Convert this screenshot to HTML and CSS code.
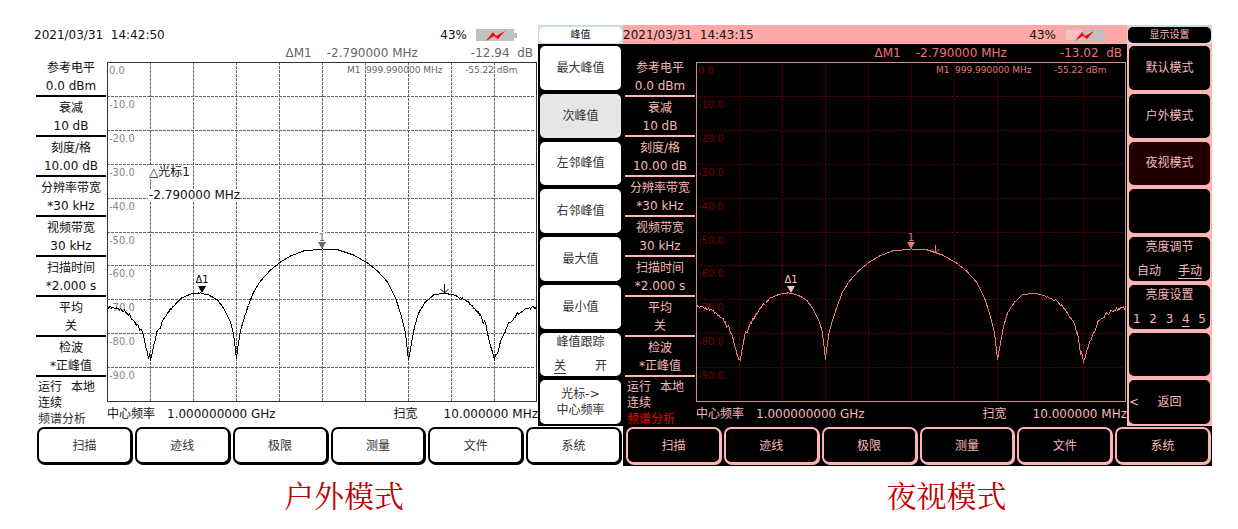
FILE: index.html
```html
<!DOCTYPE html>
<html lang="zh-CN">
<head>
    <meta charset="UTF-8" />
    <meta name="viewport" content="width=device-width, initial-scale=1.0"/>
    <title>频谱分析 - 显示模式</title>

    <link rel="stylesheet" href="styles.css">
</head>

<body>

<div class="compare">

    <!-- 户外模式 -->
    <figure class="mode">
        <div class="analyzer outdoor">
            <div class="main">
                <div class="topbar">
                    <span class="clock">2021/03/31&nbsp; 14:42:50</span>
                    <span>43%</span>
                    <svg class="battery" viewBox="0 0 42 12" aria-hidden="true">
                        <path class="battery-body" d="M0 0H38V12H0Z"/>
                        <path class="battery-nub" d="M38 4H41V9H38Z"/>
                        <path class="bolt" d="M10 12L17 3L20 7L29 2L22 10L18 7Z"/>
                    </svg>
                </div>

                <div class="side">
                    <dl class="params">
                        <div><dt>参考电平</dt><dd>0.0 dBm</dd></div>
                        <div><dt>衰减</dt><dd>10 dB</dd></div>
                        <div><dt>刻度/格</dt><dd>10.00 dB</dd></div>
                        <div><dt>分辨率带宽</dt><dd>*30 kHz</dd></div>
                        <div><dt>视频带宽</dt><dd>30 kHz</dd></div>
                        <div><dt>扫描时间</dt><dd>*2.000 s</dd></div>
                        <div><dt>平均</dt><dd>关</dd></div>
                        <div><dt>检波</dt><dd>*正峰值</dd></div>
                    </dl>
                    <div class="status">
                        <p><span>运行</span><span>本地</span></p>
                        <p>连续</p>
                        <p class="app-name">频谱分析</p>
                    </div>
                </div>

                <div class="readout">
                    <span>ΔM1</span>
                    <span class="delta-freq">-2.790000 MHz</span>
                    <span>-12.94&nbsp; dB</span>
                </div>

                <svg class="plot" viewBox="0 0 431 340" data-seed="7">
                    <g class="grid"></g>
                    <g class="note">
                        <rect x="41" y="104" width="41" height="13"/>
                        <rect x="41" y="127" width="91" height="13"/>
                        <text x="42" y="114">△光标1</text>
                        <text x="42" y="137">-2.790000 MHz</text>
                    </g>
                    <g class="peak-info">
                        <text x="240" y="11">M1</text>
                        <text x="259" y="11">999.990000 MHz</text>
                        <text x="358" y="11">-55.22 dBm</text>
                    </g>
                    <polyline class="trace"/>
                    <g class="marker-ref">
                        <rect x="212" y="170" width="6" height="9"/>
                        <text x="215" y="179">1</text>
                        <path d="M211 180H219L215 187Z"/>
                    </g>
                    <g class="marker-delta">
                        <text x="95" y="221">Δ1</text>
                        <path d="M91 224H99L95 231Z"/>
                    </g>
                    <path class="cursor" d="M337.500 222V231M333.500 227L337.500 231L341.500 227"/>
                </svg>

                <div class="freq">
                    <span>中心频率</span>
                    <span>1.000000000 GHz</span>
                    <span class="span-label">扫宽</span>
                    <span>10.000000 MHz</span>
                </div>
            </div>

            <div class="softkeys">
                <div class="softkeys-title"><span>峰值</span></div>
                <button>最大峰值</button>
                <button class="selected">次峰值</button>
                <button>左邻峰值</button>
                <button>右邻峰值</button>
                <button>最大值</button>
                <button>最小值</button>
                <button class="choice">峰值跟踪<span class="options"><u>关</u><span>开</span></span></button>
                <button>光标-&gt;<br>中心频率</button>
            </div>

            <div class="menu">
                <button>扫描</button>
                <button>迹线</button>
                <button>极限</button>
                <button>测量</button>
                <button>文件</button>
                <button>系统</button>
            </div>
        </div>
        <figcaption>户外模式</figcaption>
    </figure>

    <!-- 夜视模式 -->
    <figure class="mode">
        <div class="analyzer night">
            <div class="main">
                <div class="topbar">
                    <span class="clock">2021/03/31&nbsp; 14:43:15</span>
                    <span>43%</span>
                    <svg class="battery" viewBox="0 0 42 12" aria-hidden="true">
                        <path class="battery-body" d="M0 0H38V12H0Z"/>
                        <path class="battery-nub" d="M38 4H41V9H38Z"/>
                        <path class="battery-charge" d="M1 1H17V11H1Z"/>
                        <path class="bolt" d="M10 12L17 3L20 7L29 2L22 10L18 7Z"/>
                    </svg>
                </div>

                <div class="side">
                    <dl class="params">
                        <div><dt>参考电平</dt><dd>0.0 dBm</dd></div>
                        <div><dt>衰减</dt><dd>10 dB</dd></div>
                        <div><dt>刻度/格</dt><dd>10.00 dB</dd></div>
                        <div><dt>分辨率带宽</dt><dd>*30 kHz</dd></div>
                        <div><dt>视频带宽</dt><dd>30 kHz</dd></div>
                        <div><dt>扫描时间</dt><dd>*2.000 s</dd></div>
                        <div><dt>平均</dt><dd>关</dd></div>
                        <div><dt>检波</dt><dd>*正峰值</dd></div>
                    </dl>
                    <div class="status">
                        <p><span>运行</span><span>本地</span></p>
                        <p>连续</p>
                        <p class="app-name">频谱分析</p>
                    </div>
                </div>

                <div class="readout">
                    <span>ΔM1</span>
                    <span class="delta-freq">-2.790000 MHz</span>
                    <span>-13.02&nbsp; dB</span>
                </div>

                <svg class="plot" viewBox="0 0 431 340" data-seed="23">
                    <g class="grid"></g>
                    <g class="peak-info">
                        <text x="240" y="11">M1</text>
                        <text x="259" y="11">999.990000 MHz</text>
                        <text x="358" y="11">-55.22 dBm</text>
                    </g>
                    <polyline class="trace"/>
                    <g class="marker-ref">
                        <rect x="212" y="170" width="6" height="9"/>
                        <text x="215" y="179">1</text>
                        <path d="M211 180H219L215 187Z"/>
                    </g>
                    <g class="marker-delta">
                        <text x="95" y="221">Δ1</text>
                        <path d="M91 224H99L95 231Z"/>
                    </g>
                    <path class="cursor" d="M239.500 183V191M235.500 187L239.500 191L243.500 187"/>
                </svg>

                <div class="freq">
                    <span>中心频率</span>
                    <span>1.000000000 GHz</span>
                    <span class="span-label">扫宽</span>
                    <span>10.000000 MHz</span>
                </div>
            </div>

            <div class="softkeys">
                <div class="softkeys-title"><span>显示设置</span></div>
                <button>默认模式</button>
                <button>户外模式</button>
                <button class="selected">夜视模式</button>
                <button aria-label="空"></button>
                <button class="choice">亮度调节<span class="options"><span>自动</span><u>手动</u></span></button>
                <button class="choice">亮度设置<span class="options levels"><span>1</span><span>2</span><span>3</span><u>4</u><span>5</span></span></button>
                <button aria-label="空"></button>
                <button class="back"><span class="arrow">&lt;</span>返回</button>
            </div>

            <div class="menu">
                <button>扫描</button>
                <button>迹线</button>
                <button>极限</button>
                <button>测量</button>
                <button>文件</button>
                <button>系统</button>
            </div>
        </div>
        <figcaption class="caption-night">夜视模式</figcaption>
    </figure>

</div>

<script>
    /* 迹线采样点 [x, y] */
    const points = [
        [0, 245], [10, 246], [20, 251], [28, 260], [35, 271], [40, 290], [43, 299], [45, 290],
        [49, 272], [56, 258], [63, 247], [74, 236], [83, 232], [93, 231], [101, 233], [110, 238],
        [116, 246], [123, 260], [126, 271], [129, 298], [130, 288], [133, 268], [140, 246],
        [146, 230], [153, 219], [163, 208], [173, 200], [183, 194], [196, 189], [215, 187],
        [231, 188], [246, 193], [260, 201], [270, 209], [280, 220], [288, 236], [293, 251],
        [298, 271], [301, 298], [304, 281], [307, 265], [311, 251], [318, 240], [326, 233],
        [337, 231], [346, 233], [360, 239], [370, 249], [378, 263], [381, 273], [384, 290],
        [387, 297], [391, 290], [395, 275], [401, 261], [410, 252], [420, 247], [430, 245]
    ];

    function drawGrid(group) {
        let html = '';
        for (let i = 1; i < 10; i++) {
            const x = i * 43 + 0.5;
            const y = Math.round(i * 33.9) + 0.5;
            html += `<path class="grid-line" d="M${x} 0V340M0 ${y}H427"/>`;
        }
        for (let i = 0; i < 10; i++) {
            const label = i === 0 ? '0.0' : `-${i * 10}.0`;
            html += `<text x="2" y="${Math.round(12 + i * 33.9)}">${label}</text>`;
        }
        html += '<rect class="frame" x="0.5" y="0.5" width="429" height="339"/>';
        group.innerHTML = html;
    }

    function drawTrace(line, seed) {
        const random = () => {
            seed = (seed * 16807) % 2147483647;
            return seed / 2147483647 - 0.5;
        };
        const out = [];
        for (let i = 0; i < points.length - 1; i++) {
            const [x0, y0] = points[i];
            const [x1, y1] = points[i + 1];
            for (let x = x0; x < x1; x++) {
                const y = y0 + (y1 - y0) * (x - x0) / (x1 - x0);
                // 电平越低噪声越大
                const noise = y > 225 ? (y - 215) / 11 : 0;
                const edge = x < 70 || x > 345 ? 1 : 0.3;
                out.push(`${x + 0.5},${(y + random() * noise * edge).toFixed(1)}`);
            }
        }
        line.setAttribute('points', out.join(' '));
    }

    document.querySelectorAll('.plot').forEach(plot => {
        drawGrid(plot.querySelector('.grid'));
        drawTrace(plot.querySelector('.trace'), Number(plot.dataset.seed));
    });
</script>

</body>
</html>
```
FILE: styles.css
```css
* {
    box-sizing: border-box;
    margin: 0;
    padding: 0;
}

body {
    background: #fff;
    padding: 25px 26px 0 34px;
    font-family: "DejaVu Sans", "Noto Sans CJK SC", sans-serif;
    font-size: 12px;
}

.compare {
    display: grid;
    grid-template-columns: 1fr 1fr;
}

figcaption {
    margin-top: 11px;
    padding-left: 31px;
    text-align: center;
    color: #c00000;
    font-family: "Liberation Serif", "Noto Serif CJK SC", "Noto Sans CJK SC", serif;
    font-size: 30px;
    line-height: 40px;
}

.caption-night { padding-left: 58px; }

/* =========================
   THEMES
========================= */
.outdoor {
    --bg: #fff;
    --text: #111;
    --bar: #fff;
    --edge: #000;
    --key-text: #333;
    --selected: #e6e6e6;
    --dim: #666;
    --grid: #666;
    --label: #888;
    --frame: #333;
    --trace: #000;
    --marker: #000;
    --app-name: #333;
    --battery: #c0c0c0;
}

.night {
    --bg: #000;
    --text: #f4b8b8;
    --bar: #ffa8a8;
    --edge: #ffb4b4;
    --key-text: #f4b8b8;
    --selected: #200000;
    --dim: #e87878;
    --grid: #4c0000;
    --label: #780000;
    --frame: #c89090;
    --trace: #f07878;
    --marker: #ffc0c0;
    --app-name: #e80000;
    --battery: #c0c0c0;
}

/* =========================
   ANALYZER
========================= */
.analyzer {
    display: grid;
    grid-template-columns: 1fr 85px;
    background: var(--bg);
    color: var(--text);
}

.main {
    display: grid;
    grid-template-columns: 73px 1fr;
    grid-template-rows: 19px 18px auto 24px;
    min-width: 0;
}

.topbar {
    grid-column: 1 / 3;
    display: flex;
    align-items: center;
    gap: 9px;
    padding-right: 20px;
    background: var(--bar);
    color: #111;
}

.clock { margin-right: auto; }

.battery {
    width: 42px;
    height: 12px;
}

.battery-body, .battery-nub { fill: var(--battery); }
.battery-charge { fill: #ffc0c0; }
.bolt { fill: #f00; }

.side {
    grid-row: 2 / 5;
    display: flex;
    flex-direction: column;
    padding-top: 13px;
    line-height: 18px;
}

.params {
    flex: 1;
    display: flex;
    flex-direction: column;
    padding: 0 1px 0 2px;
    text-align: center;
    white-space: nowrap;
}

.params div {
    flex: 1;
    padding-top: 2px;
    border-bottom: 2px solid var(--edge);
}

.status {
    height: 49px;
    padding: 2px 0 0 4px;
    line-height: 16px;
}

.status p {
    display: flex;
    gap: 9px;
}

.app-name { color: var(--app-name); }

.readout {
    display: flex;
    justify-content: flex-end;
    align-items: center;
    padding-right: 5px;
    color: var(--dim);
}

.delta-freq { margin: 0 53px 0 15px; }

.freq {
    display: flex;
    align-items: baseline;
    line-height: 24px;
    white-space: nowrap;
}

.freq span:first-child { margin-right: 12px; }
.span-label { margin: 0 26px 0 auto; }

/* =========================
   PLOT
========================= */
.plot {
    display: block;
    width: 100%;
}

.plot text { font-size: 10px; }
.grid text { fill: var(--label); }

.grid-line {
    stroke: var(--grid);
    stroke-dasharray: 3 1;
}

.frame {
    fill: none;
    stroke: var(--frame);
}

.note rect, .marker-ref rect { fill: var(--bg); }

.plot .note text {
    fill: var(--text);
    font-size: 12px;
}

.plot .peak-info text {
    fill: var(--dim);
    font-size: 9px;
}

.trace {
    fill: none;
    stroke: var(--trace);
    shape-rendering: crispEdges;
}

.marker-ref { fill: var(--dim); }
.marker-delta { fill: var(--marker); }
.marker-ref text, .marker-delta text { text-anchor: middle; }

.cursor {
    fill: none;
    stroke: var(--trace);
}

/* =========================
   KEYS
========================= */
button {
    background: var(--bg);
    color: var(--key-text);
    border: 2px solid var(--edge);
    border-radius: 7px;
    box-shadow: 1px 1px 0 var(--edge);
    font: inherit;
    line-height: 16px;
}

.softkeys {
    display: flex;
    flex-direction: column;
    background: var(--edge);
}

.softkeys-title {
    height: 19px;
    padding: 2px 1px 1px;
    background: #c8dce8;
    font-size: 10px;
    line-height: 16px;
    text-align: center;
}

.softkeys-title span {
    display: block;
    border-radius: 5px;
    background: var(--bg);
}

.softkeys button {
    flex: 1;
    position: relative;
    box-shadow: none;
}

.softkeys .selected { background: var(--selected); }

.options {
    display: flex;
    justify-content: space-between;
    margin-top: 8px;
    padding: 0 14px;
}

.options u {
    text-underline-offset: 3px;
}

.night .options { padding: 0 8px; }
.night .levels { padding: 0 4px; }

.arrow {
    position: absolute;
    left: 0;
}

.menu {
    grid-column: 1 / 3;
    display: grid;
    grid-template-columns: repeat(6, 1fr);
    gap: 3px;
    padding: 1px 2px 2px 3px;
}

.menu button { height: 37px; }
```
